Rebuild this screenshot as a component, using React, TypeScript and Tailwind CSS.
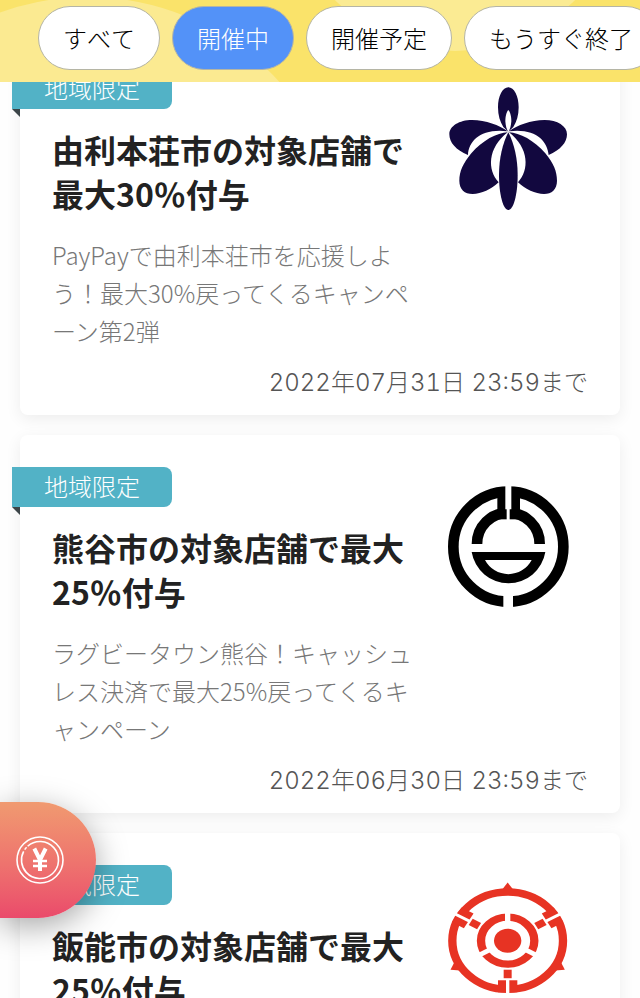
import type { ReactNode } from "react";

const tabs = [
  { label: "すべて", active: false },
  { label: "開催中", active: true },
  { label: "開催予定", active: false },
  { label: "もうすぐ終了", active: false },
];

function YurihonjoEmblem() {
  return (
    <svg viewBox="24 24 360 360" className="size-full overflow-visible" fill="#12083f" role="img" aria-label="由利本荘市">
      <path
        fillRule="evenodd"
        d="M205 22C188 22 174 48 174 82C174 106 180 126 190 141L205 155L220 141C230 126 236 106 236 82C236 48 222 22 205 22ZM205 90C199 96 196 110 196 124C197 138 200 149 205 155C210 149 213 138 214 124C214 110 211 96 205 90Z"
      />
      <path d="M203 154C178 136 138 120 96 120C58 120 28 138 28 163C28 188 48 210 84 225C86 182 124 144 203 154Z" />
      <path d="M207 154C232 136 272 120 314 120C352 120 381 138 381 163C381 188 361 210 326 225C322 182 286 144 207 154Z" />
      <path d="M203 157C172 158 126 182 94 220C69 250 58 275 58 302C58 328 74 342 98 342C124 342 154 328 176 307C142 270 142 205 203 157Z" />
      <path d="M207 157C238 158 284 182 316 220C341 250 351 275 351 302C351 328 335 342 312 342C286 342 256 328 234 307C268 270 268 205 207 157Z" />
      <path d="M205 157C188 190 177 235 177 285C177 345 190 390 205 390C220 390 233 345 233 285C233 235 222 190 205 157Z" />
    </svg>
  );
}

function KumagayaEmblem() {
  return (
    <svg viewBox="24 33 360 360" className="size-full overflow-visible" role="img" aria-label="熊谷市">
      <circle cx="205" cy="215" r="165" fill="none" stroke="#000" strokeWidth="32" />
      <path d="M111 207A94 94 0 0 1 299 207" fill="none" stroke="#000" strokeWidth="32" />
      <path d="M172 45H240V133H172Z" />
      <path d="M196 28H214V103H209V142H200V103H196Z" fill="#fff" />
      <path d="M190 355H219V402H190Z" fill="#fff" />
      <path fillRule="evenodd" d="M95 231H316A112 112 0 0 1 95 231ZM135 255H275A79 79 0 0 1 135 255Z" />
    </svg>
  );
}

function HannoEmblem() {
  return (
    <svg viewBox="24 42 360 360" className="size-full overflow-visible" fill="#e73323" role="img" aria-label="飯能市">
      <g transform="translate(203 212) scale(1 .88)">
        <circle r="166" fill="none" stroke="#e73323" strokeWidth="25" />
        <circle r="80" fill="none" stroke="#e73323" strokeWidth="25" />
        <circle r="41" />
        {[0, 120, 240].map((angle) => (
          <g key={angle} transform={`rotate(${angle})`}>
            <path d="M-29 135H29V176H-29Z" />
            <path d="M-5 130H5V182H-5Z" fill="#fff" />
            <path d="M-12 99H12V128H-12Z" />
            <path d="M-8 -96H8V-62H-8Z" fill="#fff" />
            <path d="M0 -198L17 -174H-17Z" />
          </g>
        ))}
      </g>
    </svg>
  );
}

interface Campaign {
  title: string[];
  description: string[];
  until: string;
  emblem: ReactNode;
}

const campaigns: Campaign[] = [
  {
    title: ["由利本荘市の対象店舗で", "最大30％付与"],
    description: ["PayPayで由利本荘市を応援しよ", "う！最大30%戻ってくるキャンペ", "ーン第2弾"],
    until: "2022年07月31日 23:59まで",
    emblem: <YurihonjoEmblem />,
  },
  {
    title: ["熊谷市の対象店舗で最大", "25％付与"],
    description: ["ラグビータウン熊谷！キャッシュ", "レス決済で最大25%戻ってくるキ", "ャンペーン"],
    until: "2022年06月30日 23:59まで",
    emblem: <KumagayaEmblem />,
  },
  {
    title: ["飯能市の対象店舗で最大", "25％付与"],
    description: [],
    until: "",
    emblem: <HannoEmblem />,
  },
];

function Lines({ lines }: { lines: string[] }) {
  return lines.map((line) => (
    <span key={line} className="block whitespace-nowrap">
      {line}
    </span>
  ));
}

function CampaignCard({ title, description, until, emblem }: Campaign) {
  return (
    <article className="min-h-[378px] rounded-lg bg-white pt-8 pr-8 pb-3 shadow-[0_4px_16px_rgba(0,0,0,0.07)]">
      <div className="flex items-start justify-between">
        <div>
          <div className="relative -ml-2 h-10 w-40 rounded-r-lg bg-[#52b2c6] pl-8 text-2xl leading-[38px] font-light text-white">
            地域限定
            <span className="absolute top-full left-0 size-2 bg-[#3c4548] [clip-path:polygon(0_0,100%_0,100%_100%)]" />
          </div>
          <h2 className="mt-[18px] pl-8 text-[32px] leading-[44px] font-bold text-[#222]">
            <Lines lines={title} />
          </h2>
        </div>
        <div className="mt-[19px] mr-5 size-30 shrink-0">{emblem}</div>
      </div>
      <p className="mt-[21px] pl-8 text-2xl leading-[38px] font-light text-[#777]">
        <Lines lines={description} />
      </p>
      <p className="mt-[15px] text-right font-[Inter,'Noto_Sans_CJK_JP',sans-serif] text-2xl leading-9 font-light text-[#555] tabular-nums">
        {until}
      </p>
    </article>
  );
}

export default function App() {
  return (
    <div lang="ja" className="relative h-screen overflow-hidden bg-[#fefefe] font-['Noto_Sans_CJK_JP',sans-serif]">
      <header className="relative z-10 overflow-hidden bg-[#fae36a]">
        <svg className="absolute inset-0 size-full" viewBox="0 0 640 82" preserveAspectRatio="xMinYMin slice" aria-hidden="true">
          <circle cx="88" cy="255" r="258" fill="#fbea91" />
          <circle cx="455" cy="-116" r="167" fill="#fbeb93" />
        </svg>
        <nav className="relative flex gap-3 pt-1.5 pb-3 pl-[38px] [font-kerning:none]">
          {tabs.map(({ label, active }) => (
            <button
              key={label}
              type="button"
              className={`h-16 shrink-0 rounded-full border border-[#b5b5a5] px-6 text-2xl font-light whitespace-nowrap ${
                active ? "bg-[#5392f8] text-white" : "bg-white text-black"
              }`}
            >
              {label}
            </button>
          ))}
        </nav>
      </header>

      <main className="-mt-[45px] flex flex-col gap-5 px-5">
        {campaigns.map((campaign) => (
          <CampaignCard key={campaign.title[0]} {...campaign} />
        ))}
      </main>

      <button
        type="button"
        aria-label="ポイント"
        className="absolute bottom-20 left-0 z-20 flex h-29 w-24 items-center rounded-r-full bg-linear-to-b from-[#f09a70] to-[#ea4a6b] pl-4 shadow-[0_8px_32px_rgba(0,0,0,0.35)]"
      >
        <svg viewBox="0 0 48 48" className="size-12" fill="none" stroke="#fff">
          <circle cx="24" cy="24" r="23" strokeWidth="1.6" />
          <circle cx="24" cy="24" r="18.5" strokeWidth="1.6" strokeDasharray="109 2 3 2.2" transform="rotate(228 24 24)" />
          <path d="M18.3 12.5L24 24L29.7 12.5M24 23V35" strokeWidth="4" />
          <path d="M17 25H31M17 30H31" strokeWidth="2.6" />
        </svg>
      </button>
    </div>
  );
}
